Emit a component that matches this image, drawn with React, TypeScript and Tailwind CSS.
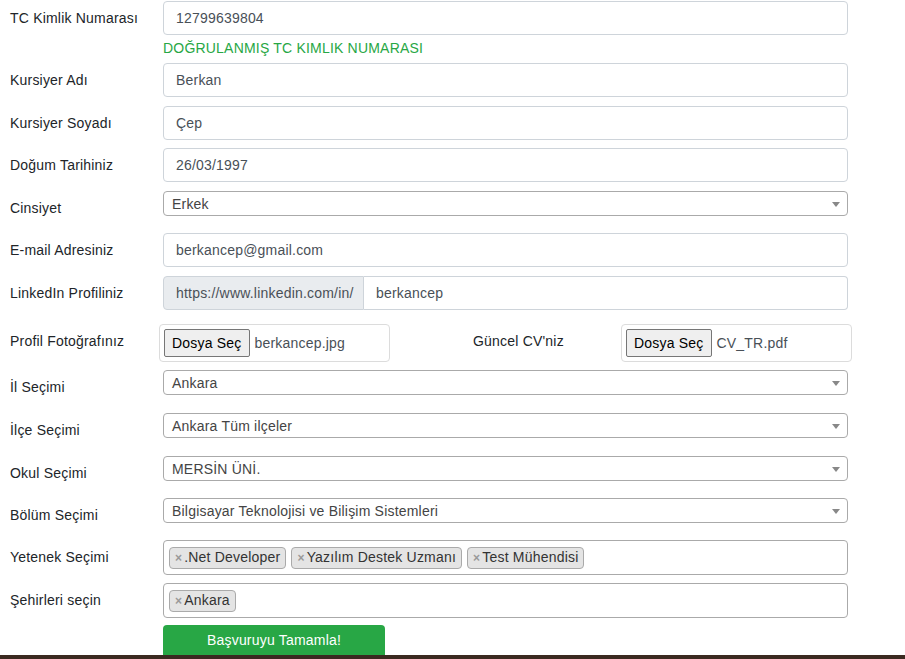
const labelCls =
  "w-[163px] shrink-0 pl-[10px] h-[34px] flex items-center text-[14px] text-[#212529]";

function TextRow({ label, value, h }: { label: string; value: string; h: string }) {
  return (
    <div className={`flex items-start ${h}`}>
      <div className={labelCls}>{label}</div>
      <div className="w-[685px] h-[34px] border border-[#ced4da] rounded-[4px] px-[12px] flex items-center text-[14px] text-[#495057]">
        {value}
      </div>
    </div>
  );
}

function SelectRow({ label, value, h }: { label: string; value: string; h: string }) {
  return (
    <div className={`flex items-start ${h}`}>
      <div className={labelCls}>{label}</div>
      <div className="w-[685px] h-[25px] border border-[#aaa] rounded-[4px] pl-[8px] pr-[7px] pt-px flex items-center justify-between text-[14px] text-[#444]">
        <span>{value}</span>
        <span className="w-0 h-0 border-t-[5px] border-t-[#888] border-x-[4px] border-x-transparent" />
      </div>
    </div>
  );
}

function Tag({ text }: { text: string }) {
  return (
    <div className="h-[22px] bg-[#e4e4e4] border border-[#aaa] rounded-[4px] pl-[5px] pr-[5px] flex items-center text-[14px] text-[#333]">
      <span className="text-[#999] font-bold text-[12px] mr-[2px]">×</span>
      {text}
    </div>
  );
}

function MultiRow({ label, tags, h }: { label: string; tags: string[]; h: string }) {
  return (
    <div className={`flex items-start ${h}`}>
      <div className={labelCls}>{label}</div>
      <div className="w-[685px] h-[35px] border border-[#aaa] rounded-[4px] px-[5px] flex items-center gap-[5px]">
        {tags.map((t) => (
          <Tag key={t} text={t} />
        ))}
      </div>
    </div>
  );
}

function FileBox({ name }: { name: string }) {
  return (
    <div className="w-[231px] h-[38px] border border-[#dcdcdc] rounded-[4px] pl-[4px] flex items-center gap-[5px] text-[14px]">
      <div className="h-[28px] px-[7px] bg-[#efefef] border border-[#767676] rounded-[2px] flex items-center text-black">
        Dosya Seç
      </div>
      <span className="text-[#495057]">{name}</span>
    </div>
  );
}

export default function App() {
  return (
    <div
      className="w-[905px] h-[659px] bg-white pt-px relative overflow-hidden tracking-[0.2px]"
      style={{ fontFamily: '"Liberation Sans", Arial, sans-serif' }}
    >
      <div className="flex items-start h-[62px]">
        <div className={labelCls}>TC Kimlik Numarası</div>
        <div className="flex flex-col">
          <div className="w-[685px] h-[34px] border border-[#ced4da] rounded-[4px] px-[12px] flex items-center text-[14px] text-[#495057]">
            12799639804
          </div>
          <div className="mt-[3px] text-[14px] leading-[20px] text-[#28a745]">
            DOĞRULANMIŞ TC KIMLIK NUMARASI
          </div>
        </div>
      </div>
      <TextRow label="Kursiyer Adı" value="Berkan" h="h-[43px]" />
      <TextRow label="Kursiyer Soyadı" value="Çep" h="h-[42px]" />
      <TextRow label="Doğum Tarihiniz" value="26/03/1997" h="h-[43px]" />
      <SelectRow label="Cinsiyet" value="Erkek" h="h-[42px]" />
      <TextRow label="E-mail Adresiniz" value="berkancep@gmail.com" h="h-[43px]" />

      <div className="flex items-start h-[48px]">
        <div className={labelCls}>LinkedIn Profiliniz</div>
        <div className="w-[685px] h-[34px] flex text-[14px] text-[#495057]">
          <div className="w-[201px] border border-[#ced4da] bg-[#e9ecef] rounded-l-[4px] px-[12px] flex items-center">
            https://www.linkedin.com/in/
          </div>
          <div className="flex-1 border border-l-0 border-[#ced4da] rounded-r-[4px] px-[12px] flex items-center">
            berkancep
          </div>
        </div>
      </div>

      <div className="flex items-start h-[46px]">
        <div className="w-[159px] shrink-0 pl-[10px] h-[34px] flex items-center text-[14px] text-[#212529]">
          Profil Fotoğrafınız
        </div>
        <FileBox name="berkancep.jpg" />
        <div className="w-[231px] pl-[83px] h-[34px] flex items-center text-[14px] text-[#212529]">
          Güncel CV'niz
        </div>
        <FileBox name="CV_TR.pdf" />
      </div>

      <SelectRow label="İl Seçimi" value="Ankara" h="h-[43px]" />
      <SelectRow label="İlçe Seçimi" value="Ankara Tüm ilçeler" h="h-[43px]" />
      <SelectRow label="Okul Seçimi" value="MERSİN ÜNİ." h="h-[42px]" />
      <SelectRow label="Bölüm Seçimi" value="Bilgisayar Teknolojisi ve Bilişim Sistemleri" h="h-[42px]" />
      <MultiRow
        label="Yetenek Seçimi"
        tags={[".Net Developer", "Yazılım Destek Uzmanı", "Test Mühendisi"]}
        h="h-[43px]"
      />
      <MultiRow label="Şehirleri seçin" tags={["Ankara"]} h="h-[42px]" />

      <div className="pl-[163px]">
        <button className="w-[222px] h-[34px] bg-[#28a745] rounded-[4px] text-white text-[14px] flex items-center justify-center pb-[4px]">
          Başvuruyu Tamamla!
        </button>
      </div>

      <div className="fixed bottom-0 left-0 w-full h-[4px] bg-[#3b2a20]" />
    </div>
  );
}
